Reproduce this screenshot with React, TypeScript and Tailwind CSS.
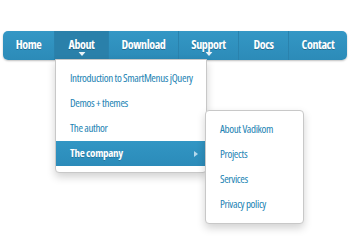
import React from "react";

const font = { fontFamily: '"Open Sans", "Noto Sans", sans-serif' };

const items = [
  { label: "Home", w: "w-[51px]", active: false, sub: false },
  { label: "About", w: "w-[54px]", active: true, sub: true },
  { label: "Download", w: "w-[70px]", active: false, sub: false },
  { label: "Support", w: "w-[60px]", active: false, sub: true },
  { label: "Docs", w: "w-[50px]", active: false, sub: false },
  { label: "Contact", w: "w-[59px]", active: false, sub: false },
];

function Caret() {
  return (
    <svg width="7" height="4" viewBox="0 0 7 4" className="absolute left-1/2 -translate-x-1/2 bottom-[4px]">
      <path d="M0 0 L7 0 L3.5 4 Z" fill="#e8f3f9" />
    </svg>
  );
}

export default function App() {
  return (
    <div className="relative w-[350px] h-[250px] bg-white overflow-hidden font-stretch-condensed" style={font}>
      <div className="pt-[31px] px-[3px]">
        <nav className="flex h-[29px] rounded-[5px] bg-gradient-to-b from-[#3497c5] to-[#2c8bb8] shadow-[0_1px_2px_rgba(0,0,0,0.25)] overflow-hidden">
          {items.map((it, i) => (
            <div
              key={it.label}
              className={`relative ${it.w} flex items-center justify-center text-white font-bold text-[12px] tracking-[-0.4px] [text-shadow:0_1px_0_rgba(0,0,0,0.25)] ${
                i > 0 ? "border-l border-[#2a82ad]" : ""
              } ${it.active ? "bg-[#2a80aa]" : ""}`}
            >
              <span className="-mt-[1px]">{it.label}</span>
              {it.sub && <Caret />}
            </div>
          ))}
        </nav>
      </div>

      {/* First dropdown */}
      <div className="absolute left-[55px] top-[59px] w-[152px] bg-white border border-[#c8c8c8] rounded-b-[4px] shadow-[0_4px_8px_rgba(0,0,0,0.18)] py-[6px]">
        {["Introduction to SmartMenus jQuery", "Demos + themes", "The author"].map((t) => (
          <div key={t} className="h-[25px] flex items-center pl-[14px] text-[11px] font-medium tracking-[-0.35px] text-[#2283b3] whitespace-nowrap">
            {t}
          </div>
        ))}
        <div className="h-[25px] flex items-center justify-between pl-[14px] pr-[8px] text-[11px] tracking-[-0.3px] font-bold text-white bg-gradient-to-b from-[#3296c4] to-[#2b8bb9] [text-shadow:0_1px_0_rgba(0,0,0,0.2)]">
          <span>The company</span>
          <svg width="4" height="6" viewBox="0 0 4 6">
            <path d="M0 0 L4 3 L0 6 Z" fill="#b5d9ec" />
          </svg>
        </div>
      </div>

      {/* Second dropdown */}
      <div className="absolute left-[205px] top-[110px] w-[99px] bg-white border border-[#c8c8c8] rounded-[4px] shadow-[0_4px_8px_rgba(0,0,0,0.18)] py-[6px]">
        {["About Vadikom", "Projects", "Services", "Privacy policy"].map((t) => (
          <div key={t} className="h-[25px] flex items-center pl-[14px] text-[11px] font-medium tracking-[-0.35px] text-[#2283b3] whitespace-nowrap">
            {t}
          </div>
        ))}
      </div>
    </div>
  );
}
